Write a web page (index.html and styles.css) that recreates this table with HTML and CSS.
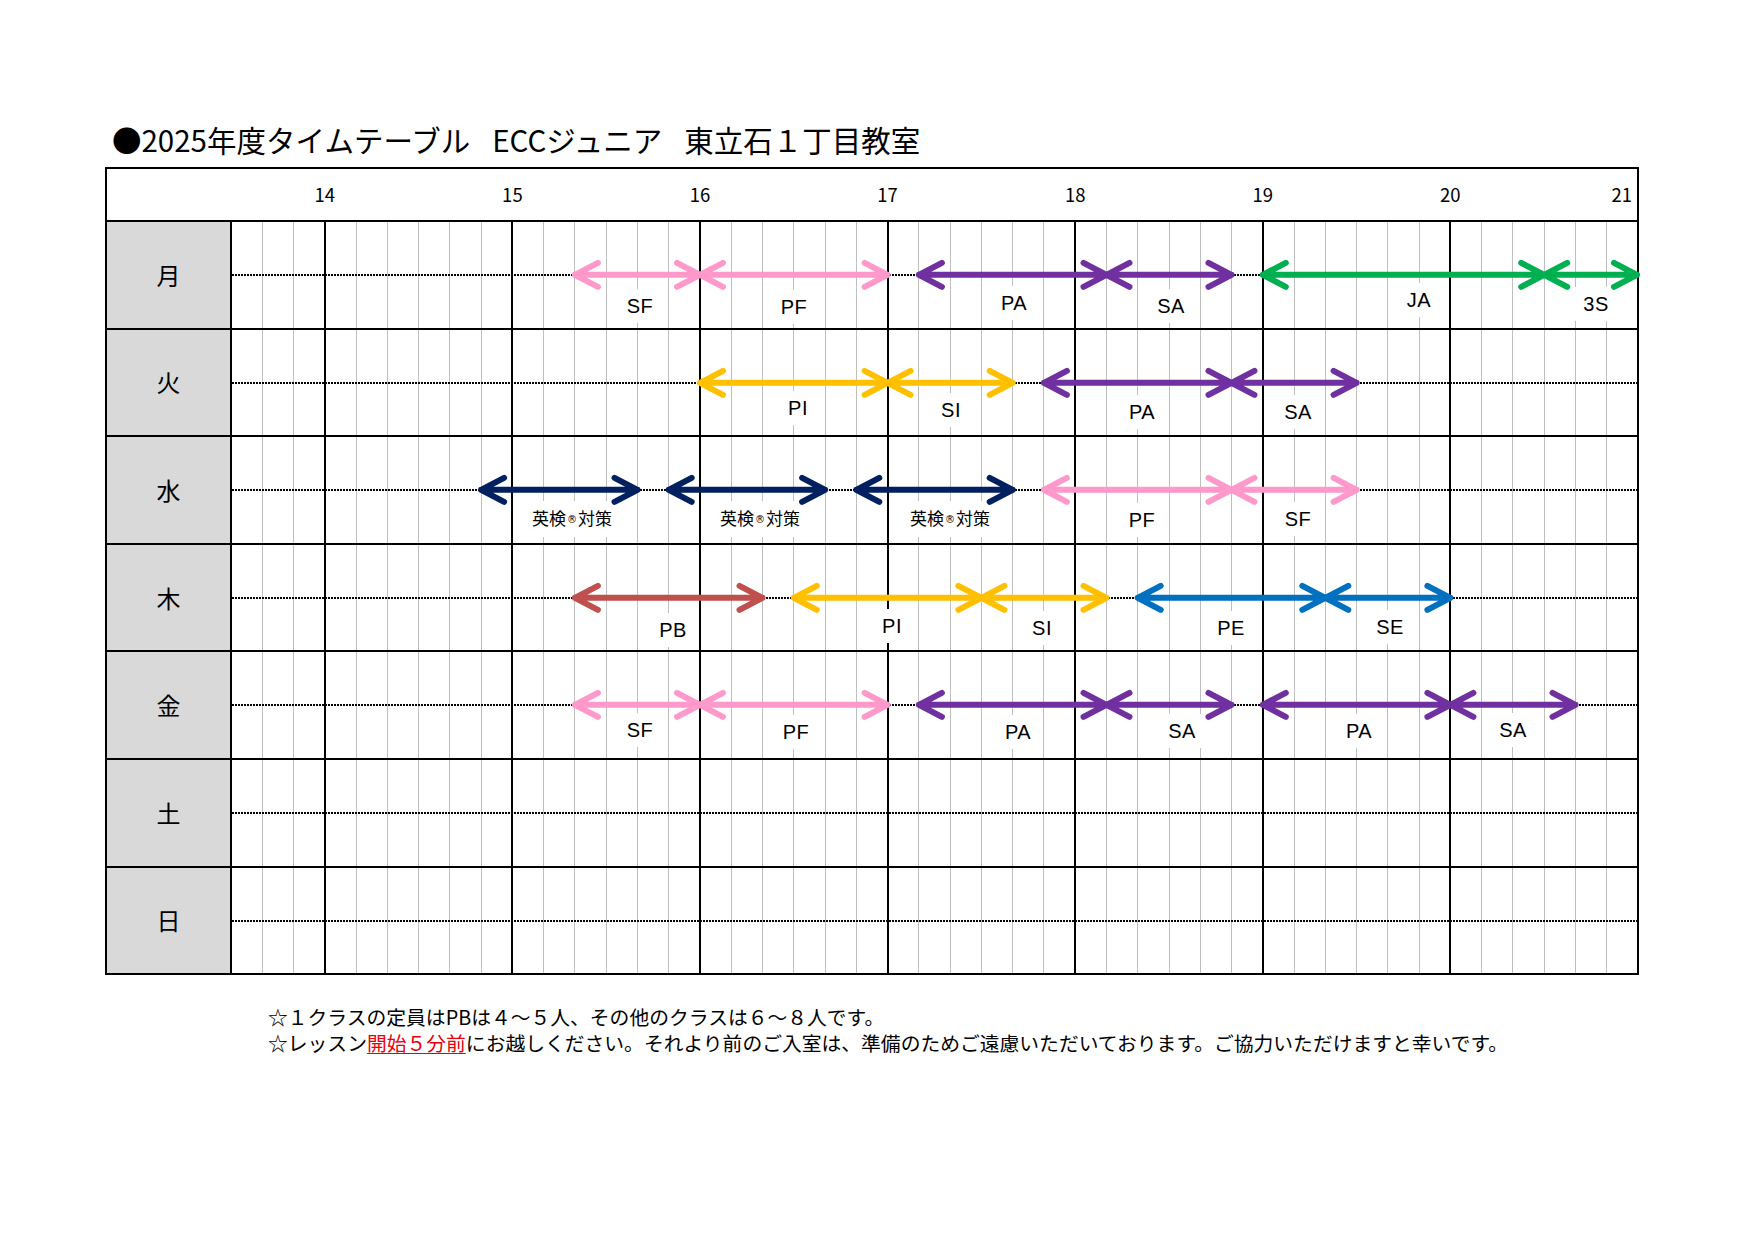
FILE: index.html
```html
<!DOCTYPE html>
<html lang="ja">
<head>
<meta charset="utf-8">
<title>2025年度タイムテーブル</title>
<link rel="stylesheet" href="styles.css">
</head>
<body>
<main class="sheet">
  <h1 class="title">●2025年度タイムテーブル<span class="gap"></span>ECCジュニア<span class="gap"></span>東立石１丁目教室</h1>
  <section class="tt">
    <div class="hdr">
      <span class="hr">14</span><span class="hr">15</span><span class="hr">16</span><span class="hr">17</span><span class="hr">18</span><span class="hr">19</span><span class="hr">20</span><span class="hr hr-end">21</span>
    </div>

    <div class="row">
      <div class="day">月</div>
      <div class="lane">
        <span class="lbl" style="left:408px;top:84px">SF</span>
        <span class="lbl" style="left:562px;top:85px">PF</span>
        <span class="lbl" style="left:782px;top:81px">PA</span>
        <span class="lbl" style="left:939px;top:84px">SA</span>
        <span class="lbl" style="left:1187px;top:78px">JA</span>
        <span class="lbl" style="left:1364px;top:82px">3S</span>
        <svg class="arrows">
          <path class="dots" d="M0 53H1405"/>
          <path class="arr pink" d="M342.9 52.8H468M365.9 40.8L342.9 52.8L365.9 64.8M445 40.8L468 52.8L445 64.8"/>
          <path class="arr pink" d="M468 52.8H655.6M491 40.8L468 52.8L491 64.8M632.6 40.8L655.6 52.8L632.6 64.8"/>
          <path class="arr purple" d="M686.9 52.8H874.5M709.9 40.8L686.9 52.8L709.9 64.8M851.5 40.8L874.5 52.8L851.5 64.8"/>
          <path class="arr purple" d="M874.5 52.8H999.5M897.5 40.8L874.5 52.8L897.5 64.8M976.5 40.8L999.5 52.8L976.5 64.8"/>
          <path class="arr green" d="M1030.8 52.8H1312.2M1053.8 40.8L1030.8 52.8L1053.8 64.8M1289.2 40.8L1312.2 52.8L1289.2 64.8"/>
          <path class="arr green" d="M1312.2 52.8H1405M1335.2 40.8L1312.2 52.8L1335.2 64.8M1382 40.8L1405 52.8L1382 64.8"/>
        </svg>
      </div>
    </div>

    <div class="row">
      <div class="day">火</div>
      <div class="lane">
        <span class="lbl" style="left:566px;top:78px">PI</span>
        <span class="lbl" style="left:719px;top:80px">SI</span>
        <span class="lbl" style="left:910px;top:82px">PA</span>
        <span class="lbl" style="left:1066px;top:82px">SA</span>
        <svg class="arrows">
          <path class="dots" d="M0 53H1405"/>
          <path class="arr yellow" d="M468 52.8H655.6M491 40.8L468 52.8L491 64.8M632.6 40.8L655.6 52.8L632.6 64.8"/>
          <path class="arr yellow" d="M655.6 52.8H780.7M678.6 40.8L655.6 52.8L678.6 64.8M757.7 40.8L780.7 52.8L757.7 64.8"/>
          <path class="arr purple" d="M811.9 52.8H999.5M834.9 40.8L811.9 52.8L834.9 64.8M976.5 40.8L999.5 52.8L976.5 64.8"/>
          <path class="arr purple" d="M999.5 52.8H1124.6M1022.5 40.8L999.5 52.8L1022.5 64.8M1101.6 40.8L1124.6 52.8L1101.6 64.8"/>
        </svg>
      </div>
    </div>

    <div class="row">
      <div class="day">水</div>
      <div class="lane">
        <span class="lbl jp" style="left:340px;top:82px">英検<span class="reg">®</span>対策</span>
        <span class="lbl jp" style="left:528px;top:82px">英検<span class="reg">®</span>対策</span>
        <span class="lbl jp" style="left:718px;top:82px">英検<span class="reg">®</span>対策</span>
        <span class="lbl" style="left:910px;top:83px">PF</span>
        <span class="lbl" style="left:1066px;top:82px">SF</span>
        <svg class="arrows">
          <path class="dots" d="M0 53H1405"/>
          <path class="arr navy" d="M249.1 52.8H405.5M272.1 40.8L249.1 52.8L272.1 64.8M382.5 40.8L405.5 52.8L382.5 64.8"/>
          <path class="arr navy" d="M436.7 52.8H593.1M459.7 40.8L436.7 52.8L459.7 64.8M570.1 40.8L593.1 52.8L570.1 64.8"/>
          <path class="arr navy" d="M624.3 52.8H780.7M647.3 40.8L624.3 52.8L647.3 64.8M757.7 40.8L780.7 52.8L757.7 64.8"/>
          <path class="arr pink" d="M811.9 52.8H999.5M834.9 40.8L811.9 52.8L834.9 64.8M976.5 40.8L999.5 52.8L976.5 64.8"/>
          <path class="arr pink" d="M999.5 52.8H1124.6M1022.5 40.8L999.5 52.8L1022.5 64.8M1101.6 40.8L1124.6 52.8L1101.6 64.8"/>
        </svg>
      </div>
    </div>

    <div class="row">
      <div class="day">木</div>
      <div class="lane">
        <span class="lbl" style="left:441px;top:85px">PB</span>
        <span class="lbl" style="left:660px;top:81px">PI</span>
        <span class="lbl" style="left:810px;top:83px">SI</span>
        <span class="lbl" style="left:999px;top:83px">PE</span>
        <span class="lbl" style="left:1158px;top:82px">SE</span>
        <svg class="arrows">
          <path class="dots" d="M0 53H1405"/>
          <path class="arr red" d="M342.9 52.8H530.5M365.9 40.8L342.9 52.8L365.9 64.8M507.5 40.8L530.5 52.8L507.5 64.8"/>
          <path class="arr yellow" d="M561.8 52.8H749.4M584.8 40.8L561.8 52.8L584.8 64.8M726.4 40.8L749.4 52.8L726.4 64.8"/>
          <path class="arr yellow" d="M749.4 52.8H874.5M772.4 40.8L749.4 52.8L772.4 64.8M851.5 40.8L874.5 52.8L851.5 64.8"/>
          <path class="arr blue" d="M905.7 52.8H1093.3M928.7 40.8L905.7 52.8L928.7 64.8M1070.3 40.8L1093.3 52.8L1070.3 64.8"/>
          <path class="arr blue" d="M1093.3 52.8H1218.4M1116.3 40.8L1093.3 52.8L1116.3 64.8M1195.4 40.8L1218.4 52.8L1195.4 64.8"/>
        </svg>
      </div>
    </div>

    <div class="row">
      <div class="day">金</div>
      <div class="lane">
        <span class="lbl" style="left:408px;top:78px">SF</span>
        <span class="lbl" style="left:564px;top:80px">PF</span>
        <span class="lbl" style="left:786px;top:80px">PA</span>
        <span class="lbl" style="left:950px;top:79px">SA</span>
        <span class="lbl" style="left:1127px;top:79px">PA</span>
        <span class="lbl" style="left:1281px;top:78px">SA</span>
        <svg class="arrows">
          <path class="dots" d="M0 53H1405"/>
          <path class="arr pink" d="M342.9 52.8H468M365.9 40.8L342.9 52.8L365.9 64.8M445 40.8L468 52.8L445 64.8"/>
          <path class="arr pink" d="M468 52.8H655.6M491 40.8L468 52.8L491 64.8M632.6 40.8L655.6 52.8L632.6 64.8"/>
          <path class="arr purple" d="M686.9 52.8H874.5M709.9 40.8L686.9 52.8L709.9 64.8M851.5 40.8L874.5 52.8L851.5 64.8"/>
          <path class="arr purple" d="M874.5 52.8H999.5M897.5 40.8L874.5 52.8L897.5 64.8M976.5 40.8L999.5 52.8L976.5 64.8"/>
          <path class="arr purple" d="M1030.8 52.8H1218.4M1053.8 40.8L1030.8 52.8L1053.8 64.8M1195.4 40.8L1218.4 52.8L1195.4 64.8"/>
          <path class="arr purple" d="M1218.4 52.8H1343.5M1241.4 40.8L1218.4 52.8L1241.4 64.8M1320.5 40.8L1343.5 52.8L1320.5 64.8"/>
        </svg>
      </div>
    </div>

    <div class="row">
      <div class="day">土</div>
      <div class="lane">
        <svg class="arrows"><path class="dots" d="M0 53H1405"/></svg>
      </div>
    </div>

    <div class="row">
      <div class="day">日</div>
      <div class="lane">
        <svg class="arrows"><path class="dots" d="M0 53H1405"/></svg>
      </div>
    </div>
  </section>

  <div class="notes">
    <p>☆１クラスの定員はPBは４～５人、その他のクラスは６～８人です。</p>
    <p>☆レッスン<span class="em">開始５分前</span>にお越しください。それより前のご入室は、準備のためご遠慮いただいております。ご協力いただけますと幸いです。</p>
  </div>
</main>
</body>
</html>
```

FILE: styles.css
```css
html, body {
  margin: 0;
  padding: 0;
  background: #fff;
}

body {
  color: #000;
  font-family: "Noto Sans CJK JP", "Noto Sans", sans-serif;
}

.sheet {
  width: 1755px;
  padding-top: 122px;
}

.title {
  margin: 0 0 0 112px;
  font-size: 29.5px;
  line-height: 35px;
  height: 35px;
  font-weight: 400;
  white-space: nowrap;
}

.gap {
  display: inline-block;
  width: 22px;
}

.tt {
  margin: 10px 0 0 105px;
  width: 1534px;
  border: 2px solid #000;
  box-sizing: border-box;
}

.hdr {
  display: flex;
  align-items: center;
  height: 51px;
  padding-left: 124px;
  font-size: 18.5px;
  line-height: 1;
}

.hr {
  flex: 0 0 187.6px;
  text-align: center;
}

.hr-end {
  flex: 1 1 auto;
  text-align: right;
  padding-right: 5px;
}

.row {
  display: flex;
  height: 107.6px;
  border-top: 2px solid #000;
  box-sizing: border-box;
}

.day {
  flex: 0 0 123px;
  background: #d9d9d9;
  border-right: 2px solid #000;
  display: flex;
  align-items: center;
  justify-content: center;
  font-size: 24px;
  line-height: 1;
}

.lane {
  flex: 1 1 auto;
  position: relative;
  background-image:
    repeating-linear-gradient(to right, transparent 0 91.8px, #000 91.8px 93.8px, transparent 93.8px 187.6px),
    repeating-linear-gradient(to right, transparent 0 29.77px, #bfbfbf 29.77px 30.77px, transparent 30.77px 31.267px);
}

.arrows {
  position: absolute;
  left: 0;
  top: 0;
  width: 1405px;
  height: 105.6px;
  overflow: visible;
}

.dots {
  fill: none;
  stroke: #000;
  stroke-width: 2;
  stroke-dasharray: 2 1;
  shape-rendering: crispEdges;
}

.arr {
  fill: none;
  stroke-width: 6;
  stroke-linecap: round;
  stroke-linejoin: round;
}

.pink { stroke: #ff99cc; }
.purple { stroke: #7030a0; }
.green { stroke: #00b050; }
.yellow { stroke: #ffc000; }
.navy { stroke: #002060; }
.red { stroke: #c0504d; }
.blue { stroke: #0070c0; }

.lbl {
  position: absolute;
  transform: translate(-50%, -50%);
  background: #fff;
  padding: 6px 11px;
  font-family: "Liberation Sans", Arial, sans-serif;
  font-size: 20px;
  line-height: 22px;
  letter-spacing: 0.5px;
  white-space: nowrap;
}

.lbl.jp {
  font-family: "Noto Sans CJK JP", sans-serif;
  font-size: 17px;
  letter-spacing: 0;
  padding: 6px 6px;
}

.reg {
  font-family: "DejaVu Sans", sans-serif;
  font-size: 10px;
  vertical-align: 2px;
  margin: 0 1px;
}

.notes {
  margin: 29px 0 0 268px;
  font-size: 19.8px;
  line-height: 26px;
  white-space: nowrap;
}

.notes p {
  margin: 0;
}

.em {
  color: #e8000b;
  text-decoration: underline;
  text-underline-offset: 2px;
}
```
